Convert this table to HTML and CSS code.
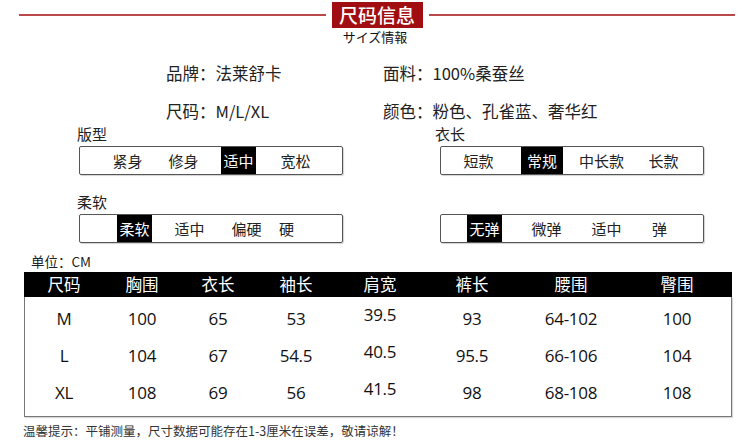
FILE: index.html
```html
<!DOCTYPE html>
<html lang="zh-CN">
<head>
<meta charset="utf-8">
<title>尺码信息</title>
<link rel="stylesheet" href="styles.css">
</head>
<body>
<div class="page">
  <div class="title-bar">
    <div class="rule"></div>
    <div class="title-box">尺码信息</div>
    <div class="rule"></div>
  </div>
  <div class="subtitle">サイズ情報</div>

  <div class="info">
    <div class="info-item">品牌<span class="colon">：</span>法莱舒卡</div>
    <div class="info-item">面料<span class="colon">：</span>100%桑蚕丝</div>
    <div class="info-item">尺码<span class="colon">：</span>M/L/XL</div>
    <div class="info-item">颜色<span class="colon">：</span>粉色、孔雀蓝、奢华红</div>
  </div>

  <div class="selectors">
    <div class="group group-left">
      <div class="label">版型</div>
      <div class="box box-fit">
        <span class="opt">紧身</span><span class="opt">修身</span><span class="opt on">适中</span><span class="opt">宽松</span>
      </div>
    </div>
    <div class="group group-right">
      <div class="label">衣长</div>
      <div class="box box-len">
        <span class="opt">短款</span><span class="opt on wide">常规</span><span class="opt w3">中长款</span><span class="opt">长款</span>
      </div>
    </div>
    <div class="group group-left">
      <div class="label">柔软</div>
      <div class="box box-soft">
        <span class="opt on">柔软</span><span class="opt">适中</span><span class="opt">偏硬</span><span class="opt">硬</span>
      </div>
    </div>
    <div class="group group-right">
      <div class="label">&nbsp;</div>
      <div class="box box-elastic">
        <span class="opt on">无弹</span><span class="opt">微弹</span><span class="opt">适中</span><span class="opt">弹</span>
      </div>
    </div>
  </div>

  <div class="unit">单位<span class="colon">：</span>CM</div>
  <div class="table">
    <div class="row head">
      <div>尺码</div><div>胸围</div><div>衣长</div><div>袖长</div><div>肩宽</div><div>裤长</div><div>腰围</div><div>臀围</div>
    </div>
    <div class="body">
      <div class="row">
        <div>M</div><div>100</div><div>65</div><div>53</div><div class="raised">39.5</div><div>93</div><div>64-102</div><div>100</div>
      </div>
      <div class="row">
        <div>L</div><div>104</div><div>67</div><div>54.5</div><div class="raised">40.5</div><div>95.5</div><div>66-106</div><div>104</div>
      </div>
      <div class="row">
        <div>XL</div><div>108</div><div>69</div><div>56</div><div class="raised">41.5</div><div>98</div><div>68-108</div><div>108</div>
      </div>
    </div>
  </div>
  <div class="note">温馨提示<span class="colon">：</span>平铺测量，尺寸数据可能存在1-3厘米在误差，敬请谅解！</div>
</div>
</body>
</html>
```

FILE: styles.css
```css
* { box-sizing: border-box; }
html, body { margin: 0; padding: 0; background: #fff; }
body {
  font-family: "Noto Sans CJK SC", "Noto Sans", sans-serif;
  color: #222;
  width: 750px;
  height: 446px;
  overflow: hidden;
}
.colon { font-family: "Noto Sans CJK TC", "Noto Sans CJK SC", sans-serif; }

.title-bar {
  display: flex;
  align-items: center;
  gap: 6px;
  height: 26px;
  margin-top: 2px;
  padding: 0 15px 0 19px;
}
.rule {
  flex: 1;
  height: 2px;
  background: #b9484b;
}
.title-box {
  width: 91px;
  height: 26px;
  background: #a10e12;
  color: #fff;
  font-size: 19px;
  font-weight: 500;
  line-height: 26px;
  text-align: center;
}
.subtitle {
  margin-top: 2px;
  text-align: center;
  font-family: "Noto Sans CJK JP", sans-serif;
  font-size: 13px;
  line-height: 14px;
  color: #111;
}

.info {
  display: grid;
  grid-template-columns: 217px 300px;
  row-gap: 16px;
  margin-top: 18px;
  padding-left: 166px;
}
.info-item {
  font-size: 16.5px;
  line-height: 22px;
  color: #222;
  white-space: nowrap;
}

.selectors {
  display: grid;
  grid-template-columns: 358px 270px;
  row-gap: 18px;
  margin-top: 3px;
  padding-left: 77px;
}
.label {
  font-size: 15px;
  line-height: 18px;
  margin-bottom: 3px;
}
.box {
  display: flex;
  width: 264px;
  height: 29px;
  border: 1px solid #555;
  border-radius: 2px;
  box-shadow: 1px 1px 1px rgba(0,0,0,0.18);
}
.group-left .box { margin-left: 2px; }
.group-right .box { margin-left: 5px; }
.opt {
  flex: none;
  width: 35px;
  font-size: 15px;
  line-height: 27px;
  text-align: center;
  color: #222;
}
.opt.wide { width: 42px; }
.opt.w3 { width: 49px; }
.opt.on { background: #000; color: #fff; }

.box-fit .opt:nth-child(1) { margin-left: 30px; }
.box-fit .opt:nth-child(2) { margin-left: 21px; }
.box-fit .opt:nth-child(3) { margin-left: 20px; }
.box-fit .opt:nth-child(4) { margin-left: 22px; }

.box-soft .opt:nth-child(1) { margin-left: 37px; }
.box-soft .opt:nth-child(2) { margin-left: 20px; }
.box-soft .opt:nth-child(3) { margin-left: 22px; }
.box-soft .opt:nth-child(4) { margin-left: 5px; }

.box-len .opt:nth-child(1) { margin-left: 20px; }
.box-len .opt:nth-child(2) { margin-left: 25px; }
.box-len .opt:nth-child(3) { margin-left: 14px; }
.box-len .opt:nth-child(4) { margin-left: 20px; }

.box-elastic .opt:nth-child(1) { margin-left: 26px; }
.box-elastic .opt:nth-child(2) { margin-left: 27px; }
.box-elastic .opt:nth-child(3) { margin-left: 25px; }
.box-elastic .opt:nth-child(4) { margin-left: 18px; }

.unit {
  margin-top: 10px;
  padding-left: 31px;
  font-size: 13.5px;
  line-height: 16px;
}
.table {
  margin: 3px 0 0 24px;
  width: 708px;
}
.row {
  display: grid;
  grid-template-columns: 80px 76px 76px 80px 88px 96px 102px 110px;
  align-items: center;
  text-align: center;
}
.row.head {
  height: 25px;
  background: #000;
  color: #fff;
  font-size: 16.5px;
  line-height: 25px;
}
.body {
  border: 1px solid #777;
  border-top: none;
  padding: 3px 0 5px;
  box-shadow: 1px 1px 1px rgba(0,0,0,0.15);
}
.body .row {
  height: 37px;
  margin-left: -1px;
  font-family: "Liberation Sans Narrow", "Open Sans", sans-serif;
  font-size: 17px;
  color: #111;
  letter-spacing: -0.3px;
}
.body .raised { padding-bottom: 8px; }

.note {
  margin-top: 6px;
  padding-left: 23px;
  font-size: 12.5px;
  line-height: 16px;
  color: #333;
}
```
